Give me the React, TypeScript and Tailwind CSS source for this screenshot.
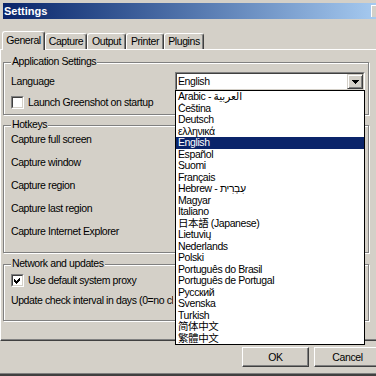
import React from "react";

const FONT =
  "font-['Liberation_Sans','Noto_Sans_CJK_SC','Noto_Sans_CJK_TC','DejaVu_Sans',sans-serif]";

function Checkbox({ checked }: { checked?: boolean }) {
  return (
    <div className="w-[13px] h-[13px] shrink-0 border border-t-[#808080] border-l-[#808080] border-r-white border-b-white">
      <div className="w-full h-full border border-t-[#404040] border-l-[#404040] border-r-[#d4d0c8] border-b-[#d4d0c8] bg-white flex items-center justify-center">
        {checked && (
          <svg width="7" height="7" viewBox="0 0 7 7" shapeRendering="crispEdges">
            <polygon points="0,2 2,4 6,0 6,3 2,7 0,5" fill="black" />
          </svg>
        )}
      </div>
    </div>
  );
}

function Group({
  label,
  className,
  children,
}: {
  label: string;
  className: string;
  children?: React.ReactNode;
}) {
  return (
    <div
      className={
        "relative ml-[2px] w-[366px] border border-[#808080] shadow-[inset_1px_1px_0_#fff,1px_1px_0_#fff] " +
        className
      }
    >
      <div className="absolute left-[7px] top-[-8px] px-[1px] bg-[#d4d0c8] leading-[13px] whitespace-nowrap">
        {label}
      </div>
      {children}
    </div>
  );
}

function Tab({
  label,
  selected,
  className,
}: {
  label: string;
  selected?: boolean;
  className: string;
}) {
  return (
    <div
      className={
        "bg-[#d4d0c8] border-l border-t border-r border-l-white border-t-white border-r-[#404040] shadow-[inset_-1px_0_0_#808080] rounded-t-[3px] flex justify-center leading-[13px] whitespace-nowrap " +
        (selected ? "h-[19px] pt-[2px] " : "mt-[2px] h-[16px] pt-[1px] ") +
        className
      }
    >
      {label}
    </div>
  );
}

function Button({ label }: { label: string }) {
  return (
    <div className="w-[67px] h-[20px] shrink-0 border border-t-white border-l-white border-r-[#404040] border-b-[#404040] shadow-[inset_-1px_-1px_0_#808080] flex items-center justify-center leading-[13px]">
      {label}
    </div>
  );
}

const languages = [
  "Arabic - العربية",
  "Čeština",
  "Deutsch",
  "ελληνικά",
  "English",
  "Español",
  "Suomi",
  "Français",
  "Hebrew - עִבְרִית",
  "Magyar",
  "Italiano",
  "日本語 (Japanese)",
  "Lietuvių",
  "Nederlands",
  "Polski",
  "Português do Brasil",
  "Português de Portugal",
  "Русский",
  "Svenska",
  "Turkish",
  "简体中文",
  "繁體中文",
];

export default function App() {
  return (
    <div
      className={
        "relative w-[376px] h-[376px] overflow-hidden bg-[#d4d0c8] text-black text-[10.5px] tracking-[-0.4px] flex flex-col " +
        FONT
      }
    >
      {/* Title bar */}
      <div className="mt-[3px] ml-[3px] w-[373px] h-[16px] shrink-0 flex items-start bg-gradient-to-r from-[#0a246a] to-[#a6caf0]">
        <span className="pl-[1px] leading-[16px] text-white font-bold text-[11px] tracking-normal">
          Settings
        </span>
        <div className="ml-auto mt-[2px] w-[5px] h-[12px] bg-[#d4d0c8] border-l border-t border-white" />
      </div>

      {/* Tabs */}
      <div className="mt-[12px] h-[19px] shrink-0 flex items-start relative z-10 pl-[2px]">
        <Tab label="General" selected className="w-[43px]" />
        <Tab label="Capture" className="w-[42px]" />
        <Tab label="Output" className="w-[39px]" />
        <Tab label="Printer" className="w-[38px]" />
        <Tab label="Plugins" className="w-[40px]" />
      </div>

      {/* Panel */}
      <div className="-mt-[1px] w-[380px] h-[292px] shrink-0 flex flex-col border border-t-white border-l-white border-r-[#404040] border-b-[#404040] shadow-[inset_-1px_-1px_0_#808080]">
        <Group label="Application Settings" className="mt-[12px] h-[53px]">
          <div className="mt-[9px] h-[19px] flex items-center pl-[7px]">
            <span className="leading-[13px]">Language</span>
            <div className="ml-auto mr-[3px] w-[190px] h-[19px] border border-t-[#808080] border-l-[#808080] border-r-white border-b-white">
              <div className="w-full h-full border border-t-[#404040] border-l-[#404040] border-r-[#d4d0c8] border-b-[#d4d0c8] bg-white flex items-center">
                <span className="pl-[1px] leading-[13px]">English</span>
                <div className="ml-auto w-[16px] h-full bg-[#d4d0c8] border border-t-[#d4d0c8] border-l-[#d4d0c8] border-r-[#404040] border-b-[#404040] shadow-[inset_1px_1px_0_#fff,inset_-1px_-1px_0_#808080] flex items-center justify-center">
                  <svg width="7" height="4" viewBox="0 0 7 4" shapeRendering="crispEdges">
                    <polygon points="0,0 7,0 3.5,4" fill="black" />
                  </svg>
                </div>
              </div>
            </div>
          </div>
          <div className="mt-[5px] h-[13px] flex items-center pl-[7px] gap-[4px]">
            <Checkbox />
            <span className="leading-[13px] whitespace-nowrap">Launch Greenshot on startup</span>
          </div>
        </Group>

        <Group label="Hotkeys" className="mt-[10px] h-[128px]">
          <div className="pt-[2px] pl-[7px] flex flex-col">
            {[
              "Capture full screen",
              "Capture window",
              "Capture region",
              "Capture last region",
              "Capture Internet Explorer",
            ].map((t) => (
              <div key={t} className="h-[23px] flex items-center leading-[13px] whitespace-nowrap">
                {t}
              </div>
            ))}
          </div>
        </Group>

        <Group label="Network and updates" className="mt-[11px] h-[57px]">
          <div className="mt-[9px] h-[13px] flex items-center pl-[7px] gap-[4px]">
            <Checkbox checked />
            <span className="leading-[13px] whitespace-nowrap">Use default system proxy</span>
          </div>
          <div className="mt-[7px] ml-[7px] w-[162px] h-[13px] overflow-hidden leading-[13px] whitespace-nowrap">
            Update check interval in days (0=no checks)
          </div>
        </Group>
      </div>

      {/* Buttons */}
      <div className="mt-[6px] flex gap-[5px] pl-[242px] shrink-0">
        <Button label="OK" />
        <Button label="Cancel" />
      </div>

      <div className="mt-[6px] h-[3px] shrink-0 border-t border-t-[#808080] bg-[#404040]" />

      {/* Dropdown list overlay */}
      <div className="absolute left-[175px] top-[90px] w-[190px] border border-black bg-white z-20">
        {languages.map((l) => (
          <div
            key={l}
            className={
              "h-[11.5px] leading-[11.5px] pl-[2px] whitespace-nowrap overflow-hidden " +
              (l === "English" ? "bg-[#0a246a] text-white" : "")
            }
          >
            {l}
          </div>
        ))}
      </div>
    </div>
  );
}
